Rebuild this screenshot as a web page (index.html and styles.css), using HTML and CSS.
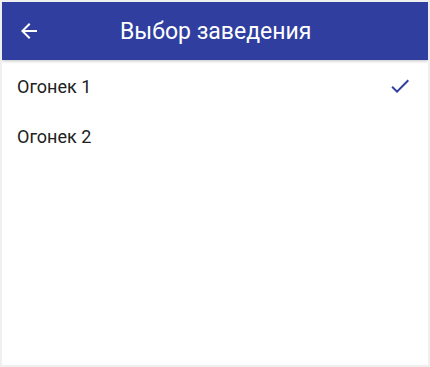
FILE: index.html
```html
<!DOCTYPE html>
<html lang="ru">
<head>
<meta charset="utf-8">
<link rel="stylesheet" href="styles.css">
</head>
<body>
<div class="frame">
  <header class="toolbar">
    <button class="back" aria-label="Назад">
      <svg width="24" height="24" viewBox="0 0 24 24"><path d="M20 11H7.83l5.59-5.59L12 4l-8 8 8 8 1.41-1.41L7.83 13H20v-2z" fill="#fff"/></svg>
    </button>
    <h1 class="title">Выбор заведения</h1>
  </header>
  <ul class="list">
    <li class="item">
      <span class="label">Огонек 1</span>
      <svg class="check" width="24" height="24" viewBox="0 0 24 24"><path d="M9 16.17L4.83 12l-1.42 1.41L9 19 21 7l-1.41-1.41z" fill="#303f9f"/></svg>
    </li>
    <li class="item">
      <span class="label">Огонек 2</span>
    </li>
  </ul>
</div>
</body>
</html>
```

FILE: styles.css
```css
html, body {
  margin: 0;
  padding: 0;
  background: #efefef;
}
body {
  font-family: Roboto, "Noto Sans", sans-serif;
}
.frame {
  margin: 2px;
  width: 426px;
  height: 363px;
  background: #fff;
  overflow: hidden;
}
.toolbar {
  height: 58px;
  background: #303f9f;
  display: flex;
  align-items: center;
  box-shadow: 0 1px 3px rgba(0,0,0,0.25);
  position: relative;
}
.back {
  background: none;
  border: 0;
  padding: 0;
  margin: 0 0 0 15px;
  width: 24px;
  height: 24px;
  display: flex;
}
.title {
  margin: 0 0 0 79px;
  font-size: 23px;
  font-weight: 400;
  color: #fff;
  letter-spacing: 0;
}
.list {
  list-style: none;
  margin: 0;
  padding: 1px 0 0;
}
.item {
  height: 50px;
  display: flex;
  align-items: center;
  justify-content: space-between;
  padding: 0 16px 0 15px;
}
.label {
  font-size: 18px;
  color: #212121;
}
.check {
  display: block;
}
```
